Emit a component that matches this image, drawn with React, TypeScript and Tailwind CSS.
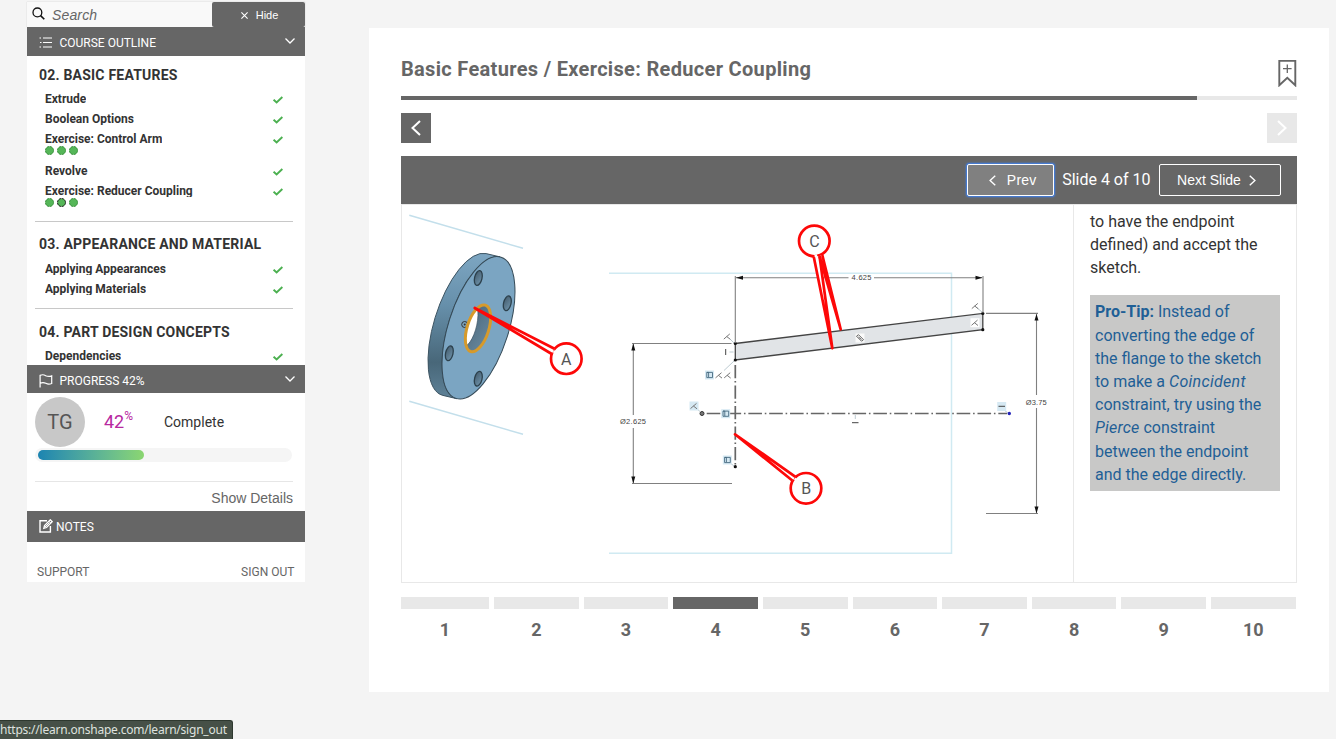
import type { ReactNode } from "react";
import { clsx } from "clsx";

type Lesson = { title: string; dots?: Array<"done" | "current"> };
type Chapter = { title: string; lessons: Lesson[] };

const chapters: Chapter[] = [
  {
    title: "02. BASIC FEATURES",
    lessons: [
      { title: "Extrude" },
      { title: "Boolean Options" },
      { title: "Exercise: Control Arm", dots: ["done", "done", "done"] },
      { title: "Revolve" },
      { title: "Exercise: Reducer Coupling", dots: ["done", "current", "done"] },
    ],
  },
  {
    title: "03. APPEARANCE AND MATERIAL",
    lessons: [{ title: "Applying Appearances" }, { title: "Applying Materials" }],
  },
  {
    title: "04. PART DESIGN CONCEPTS",
    lessons: [{ title: "Dependencies" }],
  },
];

const slides = [1, 2, 3, 4, 5, 6, 7, 8, 9, 10];
const currentSlide = 4;

export default function App() {
  return (
    <div className="relative flex h-[739px] w-[1336px] items-start overflow-hidden bg-[#f4f4f4] font-['Roboto',sans-serif] text-[#333]">
      <Sidebar />
      <Lecture />
      <div className="absolute bottom-0 left-0 h-[19px] w-[233px] rounded-tr-[3px] border-t border-r border-[#2e382f] bg-[#465047] font-['Noto_Sans','DejaVu_Sans',sans-serif] text-[12px] leading-[18px] tracking-[-0.22px] whitespace-nowrap text-[#dfe2df]">
        https://learn.onshape.com/learn/sign_out
      </div>
    </div>
  );
}

function Sidebar() {
  return (
    <aside className="mt-[2px] ml-[27px] w-[278px] shrink-0 bg-white">
      <div className="flex h-[25px] bg-[#f9f9f9] shadow-[0_0_1px_#bbb]">
        <div className="flex flex-1 items-center pl-[5px]">
          <svg className="mt-[-2px] size-[13px]" viewBox="0 0 13 13" fill="none" stroke="#111" strokeWidth="1.3">
            <circle cx="5.4" cy="5.4" r="4.4" />
            <path d="M8.6 8.6 12.3 12.3" strokeWidth="1.6" />
          </svg>
          <span className="ml-[7px] pt-[2px] font-['Liberation_Sans',sans-serif] text-[14px] tracking-[0.01em] text-[#666] italic">Search</span>
        </div>
        <button type="button" className="flex w-[93px] items-center justify-center gap-[8px] rounded-[2px] bg-[#666] pt-[1px] pl-[2px] font-['Liberation_Sans',sans-serif] text-[11px] text-white">
          <svg className="size-[7px]" viewBox="0 0 7 7" stroke="currentColor" strokeWidth="1.1">
            <path d="M.4.4 6.6 6.6M6.6.4.4 6.6" />
          </svg>
          Hide
        </button>
      </div>

      <PanelHeader className="h-[29px]" chevron icon={<ListIcon />}>
        COURSE OUTLINE
      </PanelHeader>
      <div className="h-[309px] overflow-hidden">
        {chapters.map((chapter, i) => (
          <section key={chapter.title} className={clsx(i === 1 && "mt-[8px]", i === 2 && "mt-[9px]")}>
            {i > 0 ? <div className="mr-[12px] ml-[8px] h-px bg-[#c8c8c8]" /> : null}
            <h3
              className={clsx(
                "pl-[12px] text-[14px] font-bold tracking-[0.21px] whitespace-nowrap",
                i === 0 && "h-[33px] pt-[9px] leading-[20px]",
                i === 1 && "h-[37px] pt-[12px] leading-[21px]",
                i === 2 && "h-[37px] pt-[13px] leading-[21px]",
              )}
            >
              {chapter.title}
            </h3>
            {chapter.lessons.map((lesson) => (
              <LessonRow key={lesson.title} lesson={lesson} />
            ))}
          </section>
        ))}
      </div>

      <PanelHeader className="h-[28px] pt-[2px]" chevron icon={<FlagIcon />}>
        PROGRESS 42%
      </PanelHeader>
      <div className="h-[118px] pr-[12px] pl-[8px]">
        <div className="flex h-[54px] items-center pt-[4px]">
          <span className="grid size-[50px] place-items-center rounded-full bg-[#c8c8c8] text-[20px] text-[#555]">TG</span>
          <span className="ml-[19px] flex w-[60px] text-[18px] leading-[20px] text-[#b7289f]">
            42<sup className="top-[-3px] text-[12px] leading-[14px]">%</sup>
          </span>
          <span className="text-[14px]">Complete</span>
        </div>
        <div className="mt-[1px] mr-[1px] flex h-[14px] items-center rounded-full bg-[#f5f5f5] px-[3px]">
          <div className="h-[10px] w-[106px] rounded-full bg-gradient-to-r from-[#1b84b1] to-[#8bd670]" />
        </div>
        <div className="mt-[19px] h-px bg-[#e6e6e6]" />
        <p className="pt-[7px] text-right font-['Liberation_Sans',sans-serif] text-[14px] leading-[19px] text-[#666]">Show Details</p>
      </div>

      <PanelHeader className="h-[31px] pb-[2px]" tight icon={<NotesIcon />}>
        NOTES
      </PanelHeader>
      <div className="flex h-[40px] items-end justify-between pr-[10.600px] pb-[2px] pl-[10px] text-[12px] leading-[16px] text-[#666]">
        <span>SUPPORT</span>
        <span>SIGN OUT</span>
      </div>
    </aside>
  );
}

function PanelHeader({ children, chevron, className, icon, tight }: { children: ReactNode; chevron?: boolean; className: string; icon: ReactNode; tight?: boolean }) {
  return (
    <div className={clsx("flex items-center bg-[#666] pr-[10px] pl-[12px] text-[12px] text-white", className)}>
      <span className={clsx("pt-[1px]", tight ? "w-[17px]" : "w-[20.500px]")}>{icon}</span>
      <span className="flex-1 pt-[2px]">{children}</span>
      {chevron ? (
        <svg className="mb-[2px] h-[6px] w-[10px]" viewBox="0 0 10 6" fill="none" stroke="currentColor" strokeWidth="1.3">
          <path d="M.5.5 5 5 9.5.5" />
        </svg>
      ) : null}
    </div>
  );
}

function LessonRow({ lesson }: { lesson: Lesson }) {
  return (
    <div className={clsx("flex justify-between pr-[22px] pl-[18px]", lesson.dots ? "h-[32px]" : "h-[20px]")}>
      <div>
        <div className="h-[16px] overflow-hidden text-[12px] leading-[20px] font-bold whitespace-nowrap">{lesson.title}</div>
        {lesson.dots ? (
          <div className="mt-px flex gap-[3px]">
            {lesson.dots.map((dot, i) => (
              <svg key={i} className="size-[9px]" viewBox="0 0 9 9" fill="#55b658">
                <circle cx="4.5" cy="4.5" r="4" stroke={dot === "current" ? "#222" : "#3d9240"} strokeDasharray="2.500 .640" />
              </svg>
            ))}
          </div>
        ) : null}
      </div>
      <svg className="mt-[7px] h-[8px] w-[10px]" viewBox="0 0 10 8" fill="none" stroke="#4cb050" strokeWidth="2">
        <path d="M.6 3.700 3.600 6.400 9.400 1" />
      </svg>
    </div>
  );
}

function ListIcon() {
  return (
    <svg className="h-[11px] w-[13px]" viewBox="0 0 13 11" stroke="currentColor" strokeWidth="1.1">
      <path d="M4 1h9M4 5.500h9M4 10h9M.5 1h1.500M1 5.500h1.500M.5 10h1.500" />
    </svg>
  );
}

function FlagIcon() {
  return (
    <svg className="h-[14px] w-[14px]" viewBox="0 0 14 14" fill="none" stroke="currentColor" strokeWidth="1.2">
      <path d="M1.100 13.500V1.400C3 .5 5 .6 6.700 1.700 8.800 2.700 10.900 2.600 12.700 1.900V9.500C10.900 10.300 8.800 10.400 6.800 9.300 5 8.300 3 8.300 1.100 9.300" />
    </svg>
  );
}

function NotesIcon() {
  return (
    <svg className="size-[14px]" viewBox="0 0 14 14" fill="none" stroke="currentColor" strokeWidth="1.4">
      <path d="M8 1.700H1V13h10.400V7" />
      <path d="M4.800 9.300 5.500 6.600 11.300.8 13.200 2.700 7.500 8.500Z" strokeWidth="1.300" />
      <path d="M10 2.200 11.900 4.100M6 8 10.500 3.500" strokeWidth="1" />
    </svg>
  );
}

function Lecture() {
  return (
    <main className="mt-[28px] ml-[64px] h-[664px] w-[960px] shrink-0 bg-white px-[32px]">
      <div className="flex h-[68px] justify-between">
        <h1 className="pt-[27px] text-[20px] leading-[28px] font-bold tracking-[0.32px] whitespace-nowrap text-[#666]">Basic Features / Exercise: Reducer Coupling</h1>
        <svg className="mt-[32px] h-[27px] w-[19px]" viewBox="0 0 19 27" fill="none" stroke="#666" strokeWidth="1.900">
          <path d="M1.300.9H17.300V25.300L9.300 17.700 1.300 25.300Z" />
          <path d="M9.300 4.500V13M5 8.700H13.600" strokeWidth="1.300" />
        </svg>
      </div>
      <div className="h-[4px] bg-[#e8e8e8]">
        <div className="h-full w-[796px] bg-[#666]" />
      </div>
      <div className="mt-[13px] flex justify-between">
        <button type="button" aria-label="Previous lesson" className="grid size-[30px] place-items-center bg-[#666] text-white">
          <Chevron className="h-[16px] w-[10px]" />
        </button>
        <button type="button" aria-label="Next lesson" className="grid size-[30px] place-items-center bg-[#e8e8e8] text-white">
          <Chevron className="h-[16px] w-[10px] rotate-180" />
        </button>
      </div>

      <div className="mt-[13px] flex h-[48px] items-center justify-end bg-[#666] pr-[16px] text-white">
        <button type="button" className="flex h-[32px] w-[87px] items-center justify-center gap-[11px] rounded-[2px] border border-white bg-[#808080] pl-[5px] font-['Liberation_Sans',sans-serif] text-[14px] tracking-[0.2px] shadow-[0_0_2px_1px_#3b82f6]">
          <Chevron className="h-[11px] w-[7px]" />
          Prev
        </button>
        <span className="mr-[8.500px] ml-[8.500px] text-[16px]">Slide 4 of 10</span>
        <button type="button" className="flex h-[32px] w-[122px] items-center justify-center gap-[8px] rounded-[2px] border border-white pr-[7px] font-['Liberation_Sans',sans-serif] text-[14px]">
          Next Slide
          <Chevron className="h-[11px] w-[7px] rotate-180" />
        </button>
      </div>

      <div className="flex h-[379px] border border-[#e8e8e8]">
        <Figure />
        <div className="flex-1 border-l border-[#e8e8e8] px-[16px] pt-[5px] text-[16px] leading-[23.200px]">
          <p className="whitespace-nowrap">
            to have the endpoint
            <br />
            defined) and accept the
            <br />
            sketch.
          </p>
          <p className="mt-[15.400px] bg-[#c8c8c7] px-[5px] pt-[5.400px] pb-[4.600px] whitespace-nowrap text-[#1f5f96]">
            <b>Pro-Tip:</b> Instead of
            <br />
            converting the edge of
            <br />
            the flange to the sketch
            <br />
            to make a <i className="tracking-[0.3px]">Coincident</i>
            <br />
            constraint, try using the
            <br />
            <i className="tracking-[0.200px]">Pierce</i> constraint
            <br />
            between the endpoint
            <br />
            and the edge directly.
          </p>
        </div>
      </div>

      <div className="mt-[14px] flex gap-[5px]">
        {slides.map((n) => (
          <div key={n} className={clsx("shrink-0", n === 1 ? "w-[88px]" : "w-[84.640px]")}>
            <div className={clsx("h-[12px]", n === currentSlide ? "bg-[#666]" : "bg-[#e8e8e8]")} />
            <div className="pt-[8px] text-center text-[18px] leading-[26px] font-bold text-[#666]">{n}</div>
          </div>
        ))}
      </div>
    </main>
  );
}

function Chevron({ className }: { className: string }) {
  return (
    <svg className={className} viewBox="0 0 10 16" fill="none" stroke="currentColor" strokeWidth="2">
      <path d="M9 1 1.500 8 9 15" />
    </svg>
  );
}

/* Two small strokes used for the coincident constraint */
function Coincident({ x, y, boxed }: { x: number; y: number; boxed?: string }) {
  return (
    <g transform={`translate(${x} ${y})`}>
      {boxed ? <rect x="-4.500" y="-4.500" width="9" height="9" fill={boxed} /> : null}
      <path d="M-3.500 2.600 2.500-2.600M-.6 0 3 2.800" stroke="#777" fill="none" />
    </g>
  );
}

function PierceMark({ x, y }: { x: number; y: number }) {
  return (
    <g transform={`translate(${x} ${y})`}>
      <rect x="-4.500" y="-4.500" width="9" height="9" fill="#d6e9f3" />
      <path d="M-2.700-2.600V2.600H-.9V-2.600ZM-2.700-2.600H3V2.600H-.9" stroke="#466a80" strokeWidth=".9" fill="none" />
    </g>
  );
}

function Figure() {
  return (
    <svg className="h-[377px] w-[671px] shrink-0" viewBox="402 205 671 377" fill="none">
      <defs>
        <linearGradient id="rim" x1="0" y1="0" x2="0" y2="1">
          <stop offset="0" stopColor="#7da6c2" />
          <stop offset=".35" stopColor="#6790ab" />
          <stop offset=".75" stopColor="#486779" />
          <stop offset="1" stopColor="#5f8298" />
        </linearGradient>
        <linearGradient id="bore" x1="0" y1="0" x2="1" y2="1">
          <stop offset="0" stopColor="#42596a" />
          <stop offset="1" stopColor="#7196ae" />
        </linearGradient>
        <clipPath id="boreClip">
          <ellipse cx="478" cy="328.300" rx="10.800" ry="25" transform="rotate(17.700 478 328.300)" />
        </clipPath>
      </defs>

      {/* part view */}
      <path d="M409.300 215.300 523 248.300M409.300 401.300 523 434.300" stroke="#c3dfeb" strokeWidth="1.500" />
      <path d="M486.100 253.600A30.100 74.100 17.700 0 0 442.900 395.400L456.900 398.700A30.100 74.100 17.700 0 1 500.100 256.900Z" fill="url(#rim)" stroke="#3d5462" />
      <ellipse cx="478.500" cy="327.800" rx="30.100" ry="74.100" transform="rotate(17.700 478.500 327.800)" fill="#7ba5c2" stroke="#354a57" />
      {[
        [478.300, 278],
        [507.300, 303.300],
        [449.300, 353.300],
        [478.300, 378.700],
      ].map(([x, y]) => (
        <ellipse key={`${x}-${y}`} cx={x} cy={y} rx="3.700" ry="7.500" transform={`rotate(13 ${x} ${y})`} fill="url(#bore)" stroke="#2c404c" strokeWidth="1.300" />
      ))}
      <circle cx="464.700" cy="324.500" r="3" stroke="#333" />
      <circle cx="464.700" cy="324.500" r="1" fill="#333" />
      <g clipPath="url(#boreClip)">
        <rect x="460" y="300" width="36" height="56" fill="url(#bore)" />
        <ellipse cx="466.500" cy="323" rx="10.500" ry="25" transform="rotate(12 466.500 323)" fill="#fff" stroke="#42596a" strokeWidth=".700" />
      </g>
      <ellipse cx="478" cy="328.300" rx="10.800" ry="24.300" transform="rotate(17.700 478 328.300)" stroke="#d69a2b" strokeWidth="3" />

      {/* sketch plane */}
      <path d="M609 273.300H951.500V553.300H609" stroke="#d0eaf2" strokeWidth="1.500" />

      {/* profile */}
      <path d="M735.300 343.500 982.800 313.400V329.700L735.300 360Z" fill="#e1e4e7" stroke="#444" strokeWidth="1.300" />
      <g fill="#111">
        <circle cx="735.300" cy="343.500" r="1.600" />
        <circle cx="735.300" cy="360" r="1.600" />
        <circle cx="982.800" cy="313.400" r="1.600" />
        <circle cx="982.800" cy="329.700" r="1.600" />
        <circle cx="735.300" cy="466.700" r="1.600" />
      </g>

      {/* dimensions */}
      <path
        d="M735.300 276V343M983 276V313M736 277.700H848.500M874 277.700H982M986 313.400H1038M1036.500 314V395M1036.500 408V513M986 513.500H1038M632 343.500H731.500M633.300 344V415M633.300 428V483M632 483.500H732"
        stroke="#808080"
        strokeWidth="1.100"
      />
      <path
        d="M736 277.700l7-2v4ZM982.500 277.700l-7-2v4ZM1036.500 314l-2 6.500h4ZM1036.500 513.500l-2-7h4ZM633.300 343.500l-2 7h4ZM633.300 483.500l-2-7h4Z"
        fill="#111"
      />
      <g fill="#444" textAnchor="middle" className="font-['Liberation_Sans',sans-serif] text-[7.500px]">
        <text x="861.500" y="280.300" textLength="20">4.625</text>
        <text x="1036.200" y="404.600" textLength="21">Ø3.75</text>
        <text x="633" y="424.100" textLength="26">Ø2.625</text>
      </g>

      {/* construction lines */}
      <path d="M706.700 413.500H1007" stroke="#666" strokeWidth="1.700" strokeDasharray="13.600 2.800 1.600 2.830" />
      <path d="M735.300 365V466" stroke="#666" strokeWidth="1.700" strokeDasharray="13.300 2.700 1.600 2.900" />
      <circle cx="702" cy="413.500" r="2" fill="#777" stroke="#333" />
      <circle cx="1009.300" cy="413.500" r="1.700" fill="#2222b8" />

      <path d="M730 339 734 343M724 370.500 734 361M976 307 982 312M697 409l3 2.500M729 462l5 4M855.300 415v4M1004 410l4 3M729.500 352h4" stroke="#b5c5cc" strokeWidth=".900" />
      <Coincident x={727.300} y={336.500} />
      <Coincident x={719} y={375.300} />
      <Coincident x={727.700} y={375.300} />
      <Coincident x={975.300} y={306} />
      <Coincident x={975} y={322.700} boxed="#fff" />
      <Coincident x={694} y={406} boxed="#d6e9f3" />
      <PierceMark x={709.500} y={375} />
      <PierceMark x={725.700} y={413.700} />
      <PierceMark x={727.300} y={460} />
      <path d="M725.700 349v6M852 422.700h6.500" stroke="#444" />
      <rect x="997.200" y="402" width="9" height="9" fill="#d6e9f3" />
      <path d="M998.500 406.300h6.500" stroke="#444" />
      <rect x="855.500" y="333.500" width="9" height="9" fill="#fafafa" />
      <path d="M856.500 336.200 861.500 341.200M858.500 334.700 863.500 339.700M856.500 336.200l2-1.500M861.500 341.200l2-1.500M858.500 337l3 2.500" stroke="#555" strokeWidth=".900" />

      {/* callouts */}
      <g stroke="#fd0808" strokeWidth="2.700" fill="#fff" strokeLinejoin="round">
        <circle cx="566.300" cy="358.700" r="15.300" />
        <circle cx="806" cy="488.300" r="15.300" />
        <circle cx="814.300" cy="241" r="15.300" />
        <path d="M554.500 348.800 474.700 308 551.800 354" />
        <path d="M795.500 476.800 735 434.300 792.600 480.800" />
        <path d="M813.700 256.400 832.300 348.300 819.500 256" />
        <path d="M819.500 256 840.700 329.300 822.300 255" />
      </g>
      {/* open the bubble outlines where the pointers join */}
      <g stroke="#fff" strokeWidth="2.600">
        <path d="M555.500 351.300 553.500 352.800" />
        <path d="M796.500 478.800 794.800 480.300" />
        <path d="M815.600 254.500 816.200 257" />
      </g>
      <g fill="#555" textAnchor="middle" className="font-['Roboto',sans-serif] text-[16px]">
        <text x="566.300" y="364.700">A</text>
        <text x="806.200" y="494">B</text>
        <text x="814.500" y="246.800">C</text>
      </g>
    </svg>
  );
}
